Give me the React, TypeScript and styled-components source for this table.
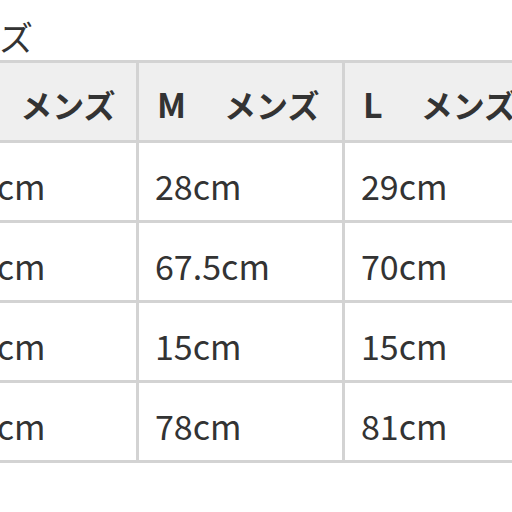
import React from "react";
import styled, { createGlobalStyle } from "styled-components";

const Global = createGlobalStyle`
  html, body { margin: 0; padding: 0; background: #ffffff; }
  body { font-family: "Noto Sans CJK JP", "Noto Sans", sans-serif; color: #333333; }
`;

const Page = styled.div`
  width: 512px;
  height: 512px;
  overflow: hidden;
  background: #ffffff;
`;

const Shift = styled.div`
  margin-left: -60px;
`;

const Title = styled.div`
  font-size: 34px;
  line-height: 1;
  margin-left: -8px;
  padding: 20px 0 0 0;
  height: 60px;
  box-sizing: border-box;
  color: #333333;
`;

const Grid = styled.div`
  display: grid;
  grid-template-columns: 193px 203px 203px;
  grid-auto-rows: 77px;
  gap: 3px;
  padding: 3px;
  background: #d3d3d3;
  width: fit-content;
`;

const Cell = styled.div<{ $head?: boolean }>`
  display: flex;
  align-items: center;
  box-sizing: border-box;
  padding-left: ${(p) => (p.$head ? "18px" : "16px")};
  padding-top: ${(p) => (p.$head ? "4px" : "8px")};
  background: ${(p) => (p.$head ? "#efefef" : "#ffffff")};
  font-size: 34px;
  font-weight: ${(p) => (p.$head ? 700 : 400)};
  line-height: 1;
  color: #333333;
  white-space: pre;
`;

const SizeLabel = styled.span`
  font-size: 34px;
`;

const Gender = styled.span`
  font-size: 32px;
  margin-left: 38px;
`;

const head = ["S", "M", "L"];
const rows = [
  ["27cm", "28cm", "29cm"],
  ["65cm", "67.5cm", "70cm"],
  ["14cm", "15cm", "15cm"],
  ["75cm", "78cm", "81cm"],
];

export default function App() {
  return (
    <Page>
      <Global />
      <Shift>
        <Title>サイズ</Title>
        <Grid>
          {head.map((h) => (
            <Cell $head key={h}>
              <SizeLabel>{h}</SizeLabel>
              <Gender>メンズ</Gender>
            </Cell>
          ))}
          {rows.map((r, i) =>
            r.map((c, j) => <Cell key={`${i}-${j}`}>{c}</Cell>)
          )}
        </Grid>
      </Shift>
    </Page>
  );
}
